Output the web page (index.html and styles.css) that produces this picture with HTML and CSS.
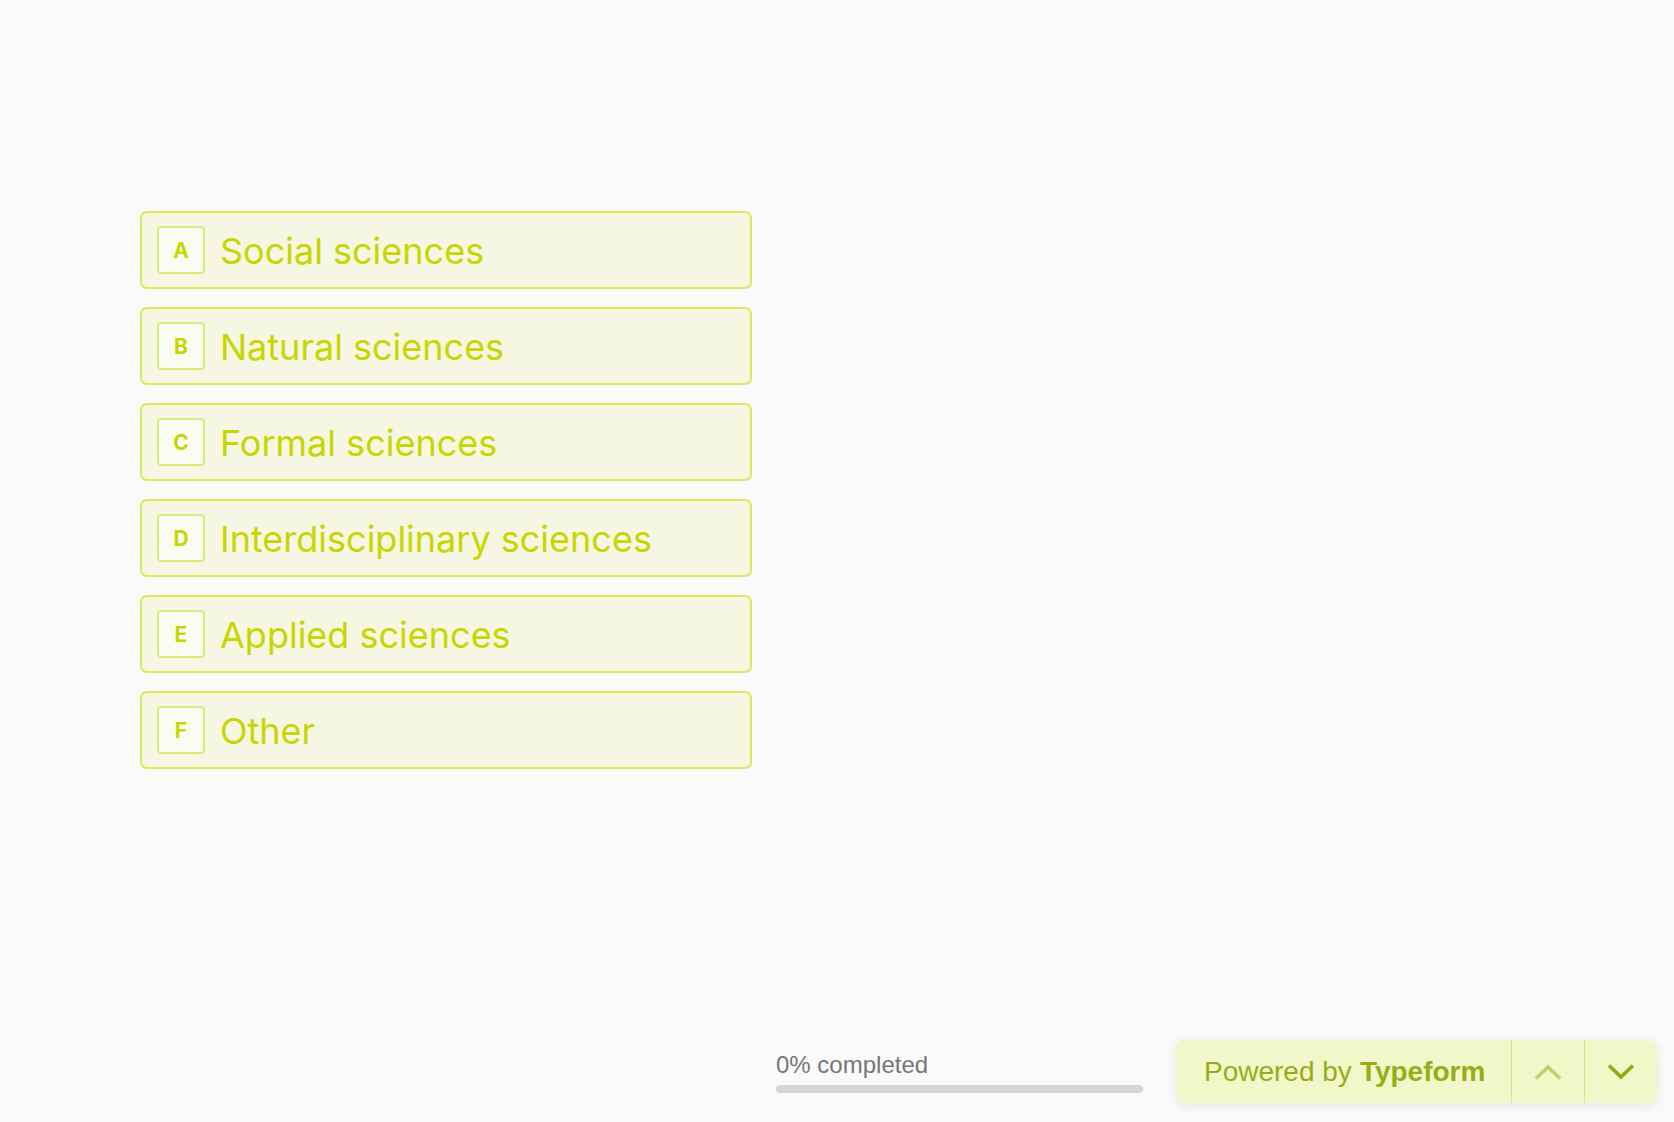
FILE: index.html
```html
<!DOCTYPE html>
<html lang="en">
<head>
<meta charset="utf-8">
<title>Typeform</title>
<link rel="stylesheet" href="styles.css">
</head>
<body>
<div class="page">
  <main class="content">
    <ul class="choices">
      <li class="choice"><span class="key">A</span><span class="label">Social sciences</span></li>
      <li class="choice"><span class="key">B</span><span class="label">Natural sciences</span></li>
      <li class="choice"><span class="key">C</span><span class="label">Formal sciences</span></li>
      <li class="choice"><span class="key">D</span><span class="label">Interdisciplinary sciences</span></li>
      <li class="choice"><span class="key">E</span><span class="label">Applied sciences</span></li>
      <li class="choice"><span class="key">F</span><span class="label">Other</span></li>
    </ul>
  </main>
  <footer class="footer">
    <div class="progress">
      <div class="progress-text">0% completed</div>
      <div class="progress-bar"></div>
    </div>
    <div class="panel">
      <div class="powered">Powered by <b>Typeform</b></div>
      <button class="nav nav-up" aria-label="Previous">
        <svg width="28" height="18" viewBox="0 0 28 18"><path d="M2 15.5 L14 4 L26 15.5" fill="none" stroke="currentColor" stroke-width="3.6"/></svg>
      </button>
      <button class="nav nav-down" aria-label="Next">
        <svg width="28" height="18" viewBox="0 0 28 18"><path d="M2 2.5 L14 14 L26 2.5" fill="none" stroke="currentColor" stroke-width="3.6"/></svg>
      </button>
    </div>
  </footer>
</div>
</body>
</html>
```

FILE: styles.css
```css
html, body {
  margin: 0;
  padding: 0;
  background: #fafafa;
}
body {
  font-family: "Liberation Sans", Arial, sans-serif;
}
.page {
  height: 1122px;
  display: flex;
  flex-direction: column;
}
.content {
  flex: 1;
  padding: 211px 0 0 140px;
}
.choices {
  list-style: none;
  margin: 0;
  padding: 0;
  width: 612px;
  display: flex;
  flex-direction: column;
  gap: 18px;
}
.choice {
  box-sizing: border-box;
  height: 78px;
  display: flex;
  align-items: center;
  padding: 0 15px;
  gap: 15px;
  background: #f5f7e3;
  border: 2px solid #dde75e;
  border-radius: 7px;
}
.key {
  box-sizing: border-box;
  width: 48px;
  height: 48px;
  display: flex;
  align-items: center;
  justify-content: center;
  border: 2px solid #dfe87a;
  border-radius: 4px;
  background: #fbfcf1;
  color: #c8d600;
  font-family: "Inter", "Liberation Sans", sans-serif;
  font-weight: 700;
  font-size: 21px;
}
.label {
  color: #c8d600;
  font-family: "Inter", "Liberation Sans", sans-serif;
  font-size: 36px;
  line-height: 1;
  padding-top: 2px;
}
.footer {
  display: flex;
  justify-content: flex-end;
  align-items: center;
  gap: 33px;
  padding: 0 17px 19px 0;
}
.progress {
  width: 367px;
}
.progress-text {
  color: #767676;
  font-size: 24px;
  line-height: 28px;
}
.progress-bar {
  margin-top: 6px;
  height: 8px;
  border-radius: 4px;
  background: #d5d5d5;
}
.panel {
  display: flex;
  height: 63px;
  background: #f1f7c9;
  border-radius: 8px;
  box-shadow: 0 3px 12px rgba(0, 0, 0, 0.08);
  overflow: hidden;
}
.powered {
  display: flex;
  align-items: center;
  padding: 0 28px;
  width: 335px;
  box-sizing: border-box;
  color: #97ad16;
  font-size: 28px;
  white-space: nowrap;
}
.powered b {
  margin-left: 8px;
}
.nav {
  width: 73px;
  border: 0;
  border-left: 1.5px solid #d6e38a;
  background: transparent;
  padding: 0;
  display: flex;
  align-items: center;
  justify-content: center;
}
.nav-up {
  color: #bfd16a;
}
.nav-down {
  color: #93aa10;
}
```
